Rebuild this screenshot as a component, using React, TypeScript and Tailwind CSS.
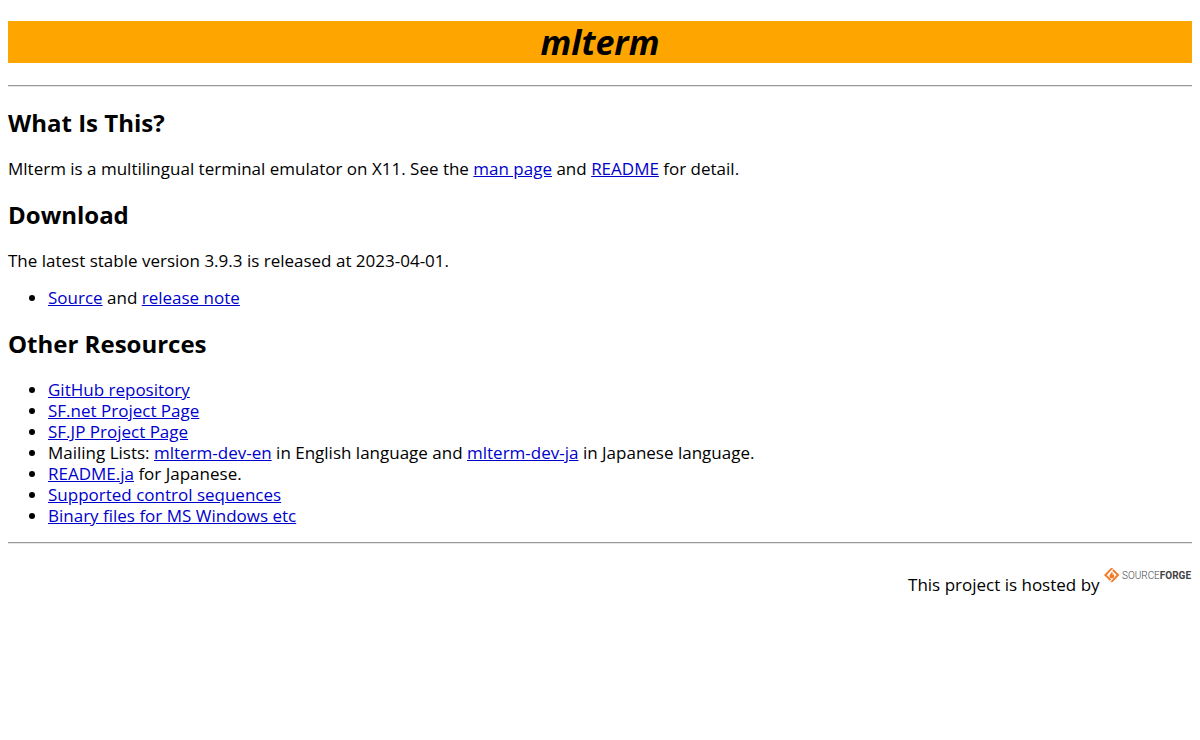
import type { ReactNode } from "react";

function Heading({ children }: { children: ReactNode }) {
  return <h2 className="my-5 text-2xl leading-[31px] font-bold">{children}</h2>;
}

function Link({ href, children }: { href: string; children: ReactNode }) {
  return (
    <a href={href} className="text-[#0000cc] underline">
      {children}
    </a>
  );
}

function Rule() {
  return <hr className="border-t border-b border-t-[#9a9a9a] border-b-[#e6e6e6]" />;
}

function SourceForgeLogo() {
  return (
    <svg viewBox="0 0 88 31" className="inline-block h-[31px] w-[88px] align-baseline" role="img" aria-label="SourceForge">
      {/* split diamond with the flame inside */}
      <path
        d="M9.3 8 L7 8 L0 15 L5.8 20.8 L7.2 19.4 L2.8 15 Z M9.6 9.2 L8.2 10.6 L12.6 15 L6.2 22 L8.6 22 L15.4 15 Z"
        fill="#f37a24"
      />
      <path d="M8 11.4 C7.8 13.2 5.4 13.8 5.4 16 C5.4 17.6 6.5 18.4 7.8 18.4 C9.2 18.4 10.2 17.4 10.2 16 C10.2 14.9 9.7 14.4 9.2 13.8 C9.3 14.9 8.9 15.2 8.6 15.2 C8.9 13.6 8.6 12.1 8 11.4 Z" fill="#f37a24" />
      <text x="18" y="19" className="font-['Roboto',sans-serif] text-[10px]" fontWeight="300" fill="#444">
        SOURCE
        <tspan fontWeight="700">FORGE</tspan>
      </text>
    </svg>
  );
}

export default function App() {
  return (
    <div className="flow-root bg-white px-2 font-['Open_Sans','Noto_Sans',sans-serif] text-[17px] leading-[21px] text-black">
      <h1 className="mt-[21px] mb-[22px] bg-[#ffa500] text-center text-[34px] leading-[42px] font-bold italic">
        mlterm
      </h1>
      <Rule />

      <Heading>What Is This?</Heading>
      <p className="my-4">
        Mlterm is a multilingual terminal emulator on X11. See the <Link href="#man">man page</Link> and{" "}
        <Link href="#readme">README</Link> for detail.
      </p>

      <Heading>Download</Heading>
      <p className="my-4">The latest stable version 3.9.3 is released at 2023-04-01.</p>
      <ul className="my-4 list-disc pl-10">
        <li>
          <Link href="#source">Source</Link> and <Link href="#release">release note</Link>
        </li>
      </ul>

      <Heading>Other Resources</Heading>
      <ul className="my-4 list-disc pl-10">
        <li>
          <Link href="#github">GitHub repository</Link>
        </li>
        <li>
          <Link href="#sfnet">SF.net Project Page</Link>
        </li>
        <li>
          <Link href="#sfjp">SF.JP Project Page</Link>
        </li>
        <li>
          Mailing Lists: <Link href="#dev-en">mlterm-dev-en</Link> in English language and{" "}
          <Link href="#dev-ja">mlterm-dev-ja</Link> in Japanese language.
        </li>
        <li>
          <Link href="#readme-ja">README.ja</Link> for Japanese.
        </li>
        <li>
          <Link href="#sequences">Supported control sequences</Link>
        </li>
        <li>
          <Link href="#binaries">Binary files for MS Windows etc</Link>
        </li>
      </ul>
      <Rule />

      <p className="my-4 text-right">
        This project is hosted by{" "}
        <a href="#sourceforge">
          <SourceForgeLogo />
        </a>
      </p>
    </div>
  );
}
